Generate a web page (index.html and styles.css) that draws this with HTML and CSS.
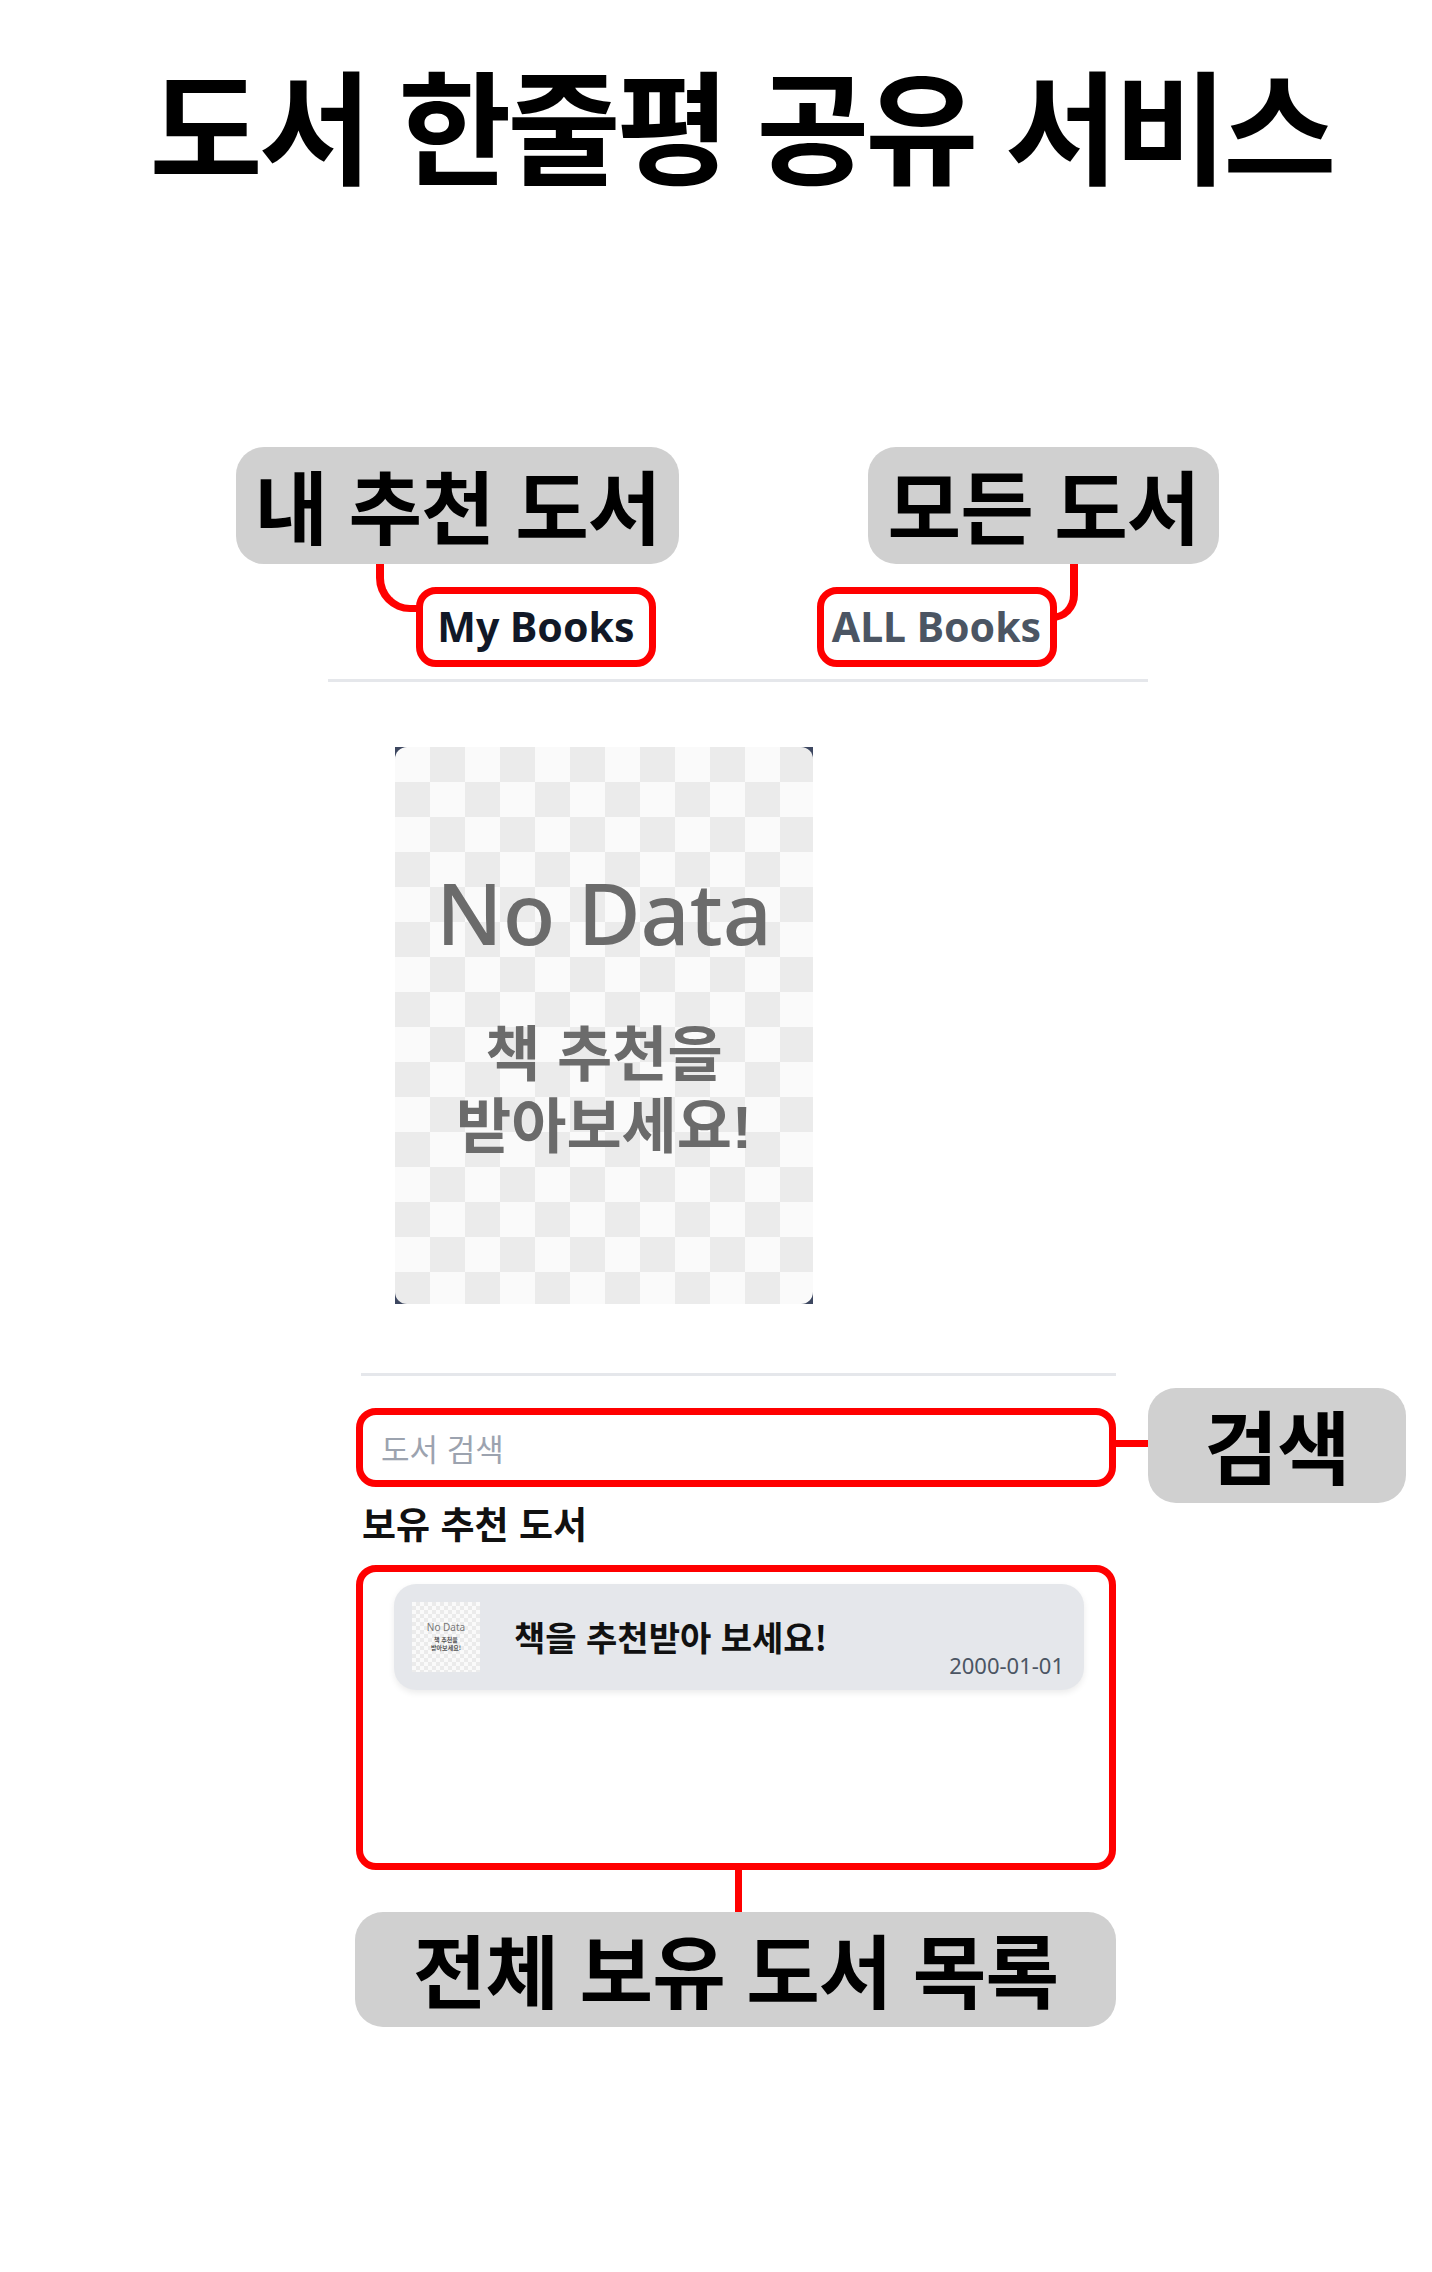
FILE: index.html
```html
<!DOCTYPE html>
<html lang="ko">
<head>
<meta charset="utf-8">
<title>도서 한줄평 공유 서비스</title>
<link rel="stylesheet" href="styles.css">
</head>
<body>
<div class="page">
  <h1 class="title">도서 한줄평 공유 서비스</h1>

  <nav class="tabs">
    <div class="tab"><span class="tab-label mark active">My Books</span></div>
    <div class="tab"><span class="tab-label mark">ALL Books</span></div>
  </nav>

  <section class="recommend">
    <div class="cover">
      <div class="cover-art">
        <p class="cover-nodata">No Data</p>
        <p class="cover-msg">책 추천을</p>
        <p class="cover-msg">받아보세요!</p>
      </div>
    </div>
  </section>

  <section class="library">
    <hr class="divider">
    <input class="search mark" type="text" placeholder="도서 검색">
    <h2 class="lib-heading">보유 추천 도서</h2>
    <div class="book-list mark">
      <div class="book-card">
        <div class="thumb">
          <span class="thumb-nd">No Data</span>
          <span class="thumb-msg">책 추천을<br>받아보세요!</span>
        </div>
        <p class="book-title">책을 추천받아 보세요!</p>
        <span class="book-date">2000-01-01</span>
      </div>
    </div>
  </section>

  <div class="wire wire-mine"></div>
  <div class="wire wire-all"></div>
  <div class="wire wire-search"></div>
  <div class="wire wire-list"></div>

  <div class="note note-mine">내 추천 도서</div>
  <div class="note note-all">모든 도서</div>
  <div class="note note-search">검색</div>
  <div class="note note-list">전체 보유 도서 목록</div>
</div>
</body>
</html>
```

FILE: styles.css
```css
* { box-sizing: border-box; }
html, body { margin: 0; background: #fff; }
body { font-family: "Noto Sans", "Noto Sans CJK KR", sans-serif; color: #111; }

.page { position: relative; width: 1432px; height: 2272px; overflow: hidden; }

.title {
  margin: 55px 0 0;
  padding-left: 50px;
  height: 132px;
  text-align: center;
  font: 700 123px/132px "Noto Sans CJK KR", sans-serif;
  letter-spacing: -4px;
  color: #000;
}

/* tabs */
.tabs {
  display: flex;
  width: 820px;
  margin: 400px 0 0 328px;
  padding-bottom: 12px;
  border-bottom: 3px solid #e5e7eb;
}
.tab { flex: 1; display: flex; justify-content: center; }
.tab:first-child .tab-label { margin-left: 6px; }
.tab:last-child .tab-label { margin-right: 13px; }
.mark { border: 7px solid #ff0000; border-radius: 20px; }
.tab-label {
  display: flex;
  align-items: center;
  justify-content: center;
  width: 240px;
  height: 80px;
  padding-bottom: 2px;
  font: 700 41px/1 "Noto Sans", sans-serif;
  color: #4b5563;
}
.tab-label.active { color: #111827; }

/* recommended cover */
.recommend { margin: 65px 0 0 395px; }
.cover { width: 418px; height: 557px; background: #3d4760; }
.cover-art {
  height: 100%;
  border-radius: 12px;
  background-color: #fafafa;
  background-image: conic-gradient(#ebebeb 25%, #fafafa 0 50%, #ebebeb 0 75%, #fafafa 0);
  background-size: 70px 70px;
  display: flex;
  flex-direction: column;
  align-items: center;
  text-align: center;
  color: #6b6b6b;
  overflow: hidden;
}
.cover-nodata { margin: 122px 0 0; font: 500 86px/86px "Noto Sans", sans-serif; }
.cover-msg { margin: 0; font: 700 60px/72px "Liberation Sans", "Noto Sans CJK KR", sans-serif; }
.cover-nodata + .cover-msg { margin-top: 65px; }

/* library */
.library { width: 761px; margin: 69px 0 0 356px; }
.divider { margin: 0 0 0 5px; width: 755px; height: 3px; border: 0; background: #e5e7eb; }
.search {
  display: block;
  width: 760px;
  height: 79px;
  margin-top: 32px;
  padding: 0 18px;
  font: 400 31px "Noto Sans CJK KR", sans-serif;
  color: #111;
  background: #fff;
  outline: none;
}
.search::placeholder { color: #9ca3af; }
.lib-heading {
  margin: 14px 0 19px 6px;
  font: 700 37px/45px "Noto Sans CJK KR", sans-serif;
  color: #111;
}
.book-list {
  width: 760px;
  height: 305px;
  padding: 12px 26px 0 31px;
}
.book-card {
  position: relative;
  display: flex;
  align-items: center;
  width: 690px;
  height: 106px;
  padding: 0 18px;
  border-radius: 22px;
  background: #e5e7eb;
  box-shadow: 0 3px 6px rgba(0, 0, 0, 0.08);
}
.thumb {
  flex: none;
  width: 68px;
  height: 70px;
  display: flex;
  flex-direction: column;
  align-items: center;
  justify-content: center;
  gap: 4px;
  background-color: #fafafa;
  background-image: conic-gradient(#ebebeb 25%, #fafafa 0 50%, #ebebeb 0 75%, #fafafa 0);
  background-size: 8px 8px;
  color: #777;
  text-align: center;
}
.thumb-nd { font: 400 10px/1 "Noto Sans", sans-serif; }
.thumb-msg { font: 700 6px/8px "Noto Sans CJK KR", sans-serif; color: #555; }
.book-title {
  margin: 0 0 0 34px;
  font: 700 34px/1.2 "Noto Sans CJK KR", sans-serif;
  color: #111;
}
.book-date {
  position: absolute;
  right: 20px;
  bottom: 14px;
  font: 400 22px/22px "Noto Sans", sans-serif;
  color: #4b5563;
}

/* annotations */
.wire { position: absolute; border: 0 solid #ff0000; }
.wire-mine {
  left: 376px; top: 560px; width: 46px; height: 52px;
  border-left-width: 8px; border-bottom-width: 7px;
  border-bottom-left-radius: 34px;
}
.wire-all {
  left: 1050px; top: 560px; width: 28px; height: 61px;
  border-right-width: 8px; border-bottom-width: 7px;
  border-bottom-right-radius: 26px;
}
.wire-search { left: 1112px; top: 1440px; width: 40px; height: 7px; background: #ff0000; }
.wire-list { left: 735px; top: 1865px; width: 7px; height: 50px; background: #ff0000; }

.note {
  position: absolute;
  display: flex;
  align-items: center;
  justify-content: center;
  padding-bottom: 6px;
  background: #d0d0d0;
  border-radius: 28px;
  font: 700 80px/1 "Noto Sans CJK KR", sans-serif;
  letter-spacing: -1px;
  color: #000;
  white-space: nowrap;
}
.note-mine { left: 236px; top: 447px; width: 443px; height: 117px; }
.note-all { left: 868px; top: 447px; width: 351px; height: 117px; }
.note-search { left: 1148px; top: 1388px; width: 258px; height: 115px; }
.note-list { left: 355px; top: 1912px; width: 761px; height: 115px; }
```
